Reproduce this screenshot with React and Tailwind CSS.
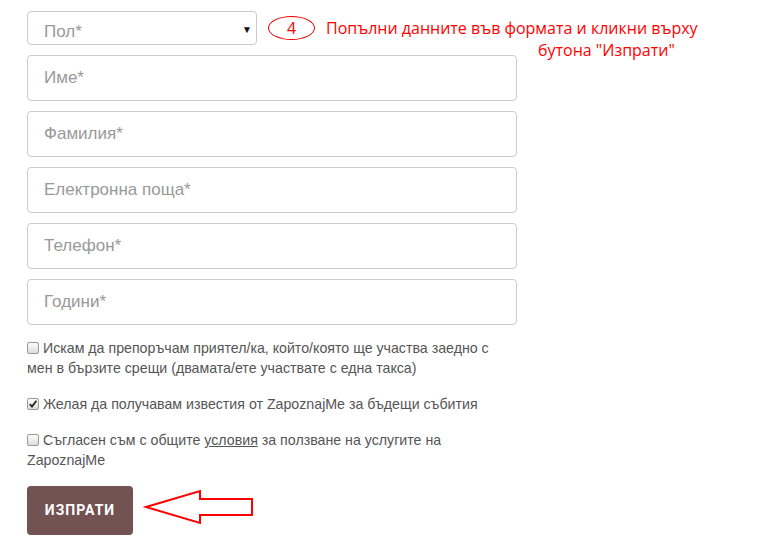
import React from "react";

function Box({ checked }) {
  return (
    <span className="relative inline-block w-[12px] h-[12px] rounded-[2px] border border-[#9a9a9a] bg-gradient-to-b from-[#fcfcfc] to-[#dcdcdc] align-[-1px]">
      {checked && (
        <svg className="absolute left-[0px] top-[0px]" width="10" height="10" viewBox="0 0 10 10">
          <path d="M1.8 5.2 L4 7.6 L8.4 1.8" fill="none" stroke="#222" strokeWidth="1.8" />
        </svg>
      )}
    </span>
  );
}

function Field({ label }) {
  return (
    <div className="h-[46px] w-[490px] rounded-[4px] border border-[#cccccc] bg-white flex items-center pl-[16px] text-[17px] text-[#999999]">
      {label}
    </div>
  );
}

export default function App() {
  return (
    <div className="relative w-[780px] h-[555px] bg-white overflow-hidden" style={{ fontFamily: '"Liberation Sans", Arial, sans-serif' }}>
      <div className="pl-[27px] pt-[11px] flex flex-col">
        <div className="relative h-[34px] w-[230px] rounded-[4px] border border-[#cccccc] bg-white pl-[16px] pt-[7px] text-[17px] text-[#999999]">
          Пол*
          <span className="absolute right-[4px] top-[10px] text-[10px] text-[#111]">▼</span>
        </div>
        <div className="flex flex-col gap-[10px] mt-[10px]">
          <Field label="Име*" />
          <Field label="Фамилия*" />
          <Field label="Електронна поща*" />
          <Field label="Телефон*" />
          <Field label="Години*" />
        </div>
        <div className="w-[490px] text-[14.2px] leading-[20px] text-[#555555] mt-[13px] flex flex-col gap-[16px]">
          <p><Box /> Искам да препоръчам приятел/ка, който/която ще участва заедно с мен в бързите срещи (двамата/ете участвате с една такса)</p>
          <p><Box checked /> Желая да получавам известия от ZapoznajMe за бъдещи събития</p>
          <p><Box /> Съгласен съм с общите <span className="underline">условия</span> за ползване на услугите на ZapoznajMe</p>
        </div>
        <button className="mt-[16px] w-[106px] h-[49px] rounded-[4px] bg-[#735252] text-white text-[14px] font-bold tracking-[1px]" style={{ fontFamily: 'Roboto, sans-serif' }}>
          ИЗПРАТИ
        </button>
      </div>

      <div className="absolute left-[268px] top-[16px] w-[47px] h-[24px] rounded-[50%] border-[1.5px] border-[#ee0000] flex items-center justify-center text-[16px] text-[#ff0000]" style={{ fontFamily: '"Open Sans", sans-serif' }}>
        4
      </div>
      <div className="absolute left-[326px] top-[17px] text-[16px] leading-[22px] text-[#ff0000]" style={{ fontFamily: '"Open Sans", sans-serif' }}>
        <div>Попълни данните във формата и кликни върху</div>
        <div className="pl-[212px]">бутона "Изпрати"</div>
      </div>

      <svg className="absolute left-0 top-0" width="780" height="555" viewBox="0 0 780 555">
        <polygon points="146,507 200,491 200,499 252,499 252,515 200,515 200,523" fill="white" stroke="#ff0000" strokeWidth="2" strokeLinejoin="miter" />
      </svg>
    </div>
  );
}
